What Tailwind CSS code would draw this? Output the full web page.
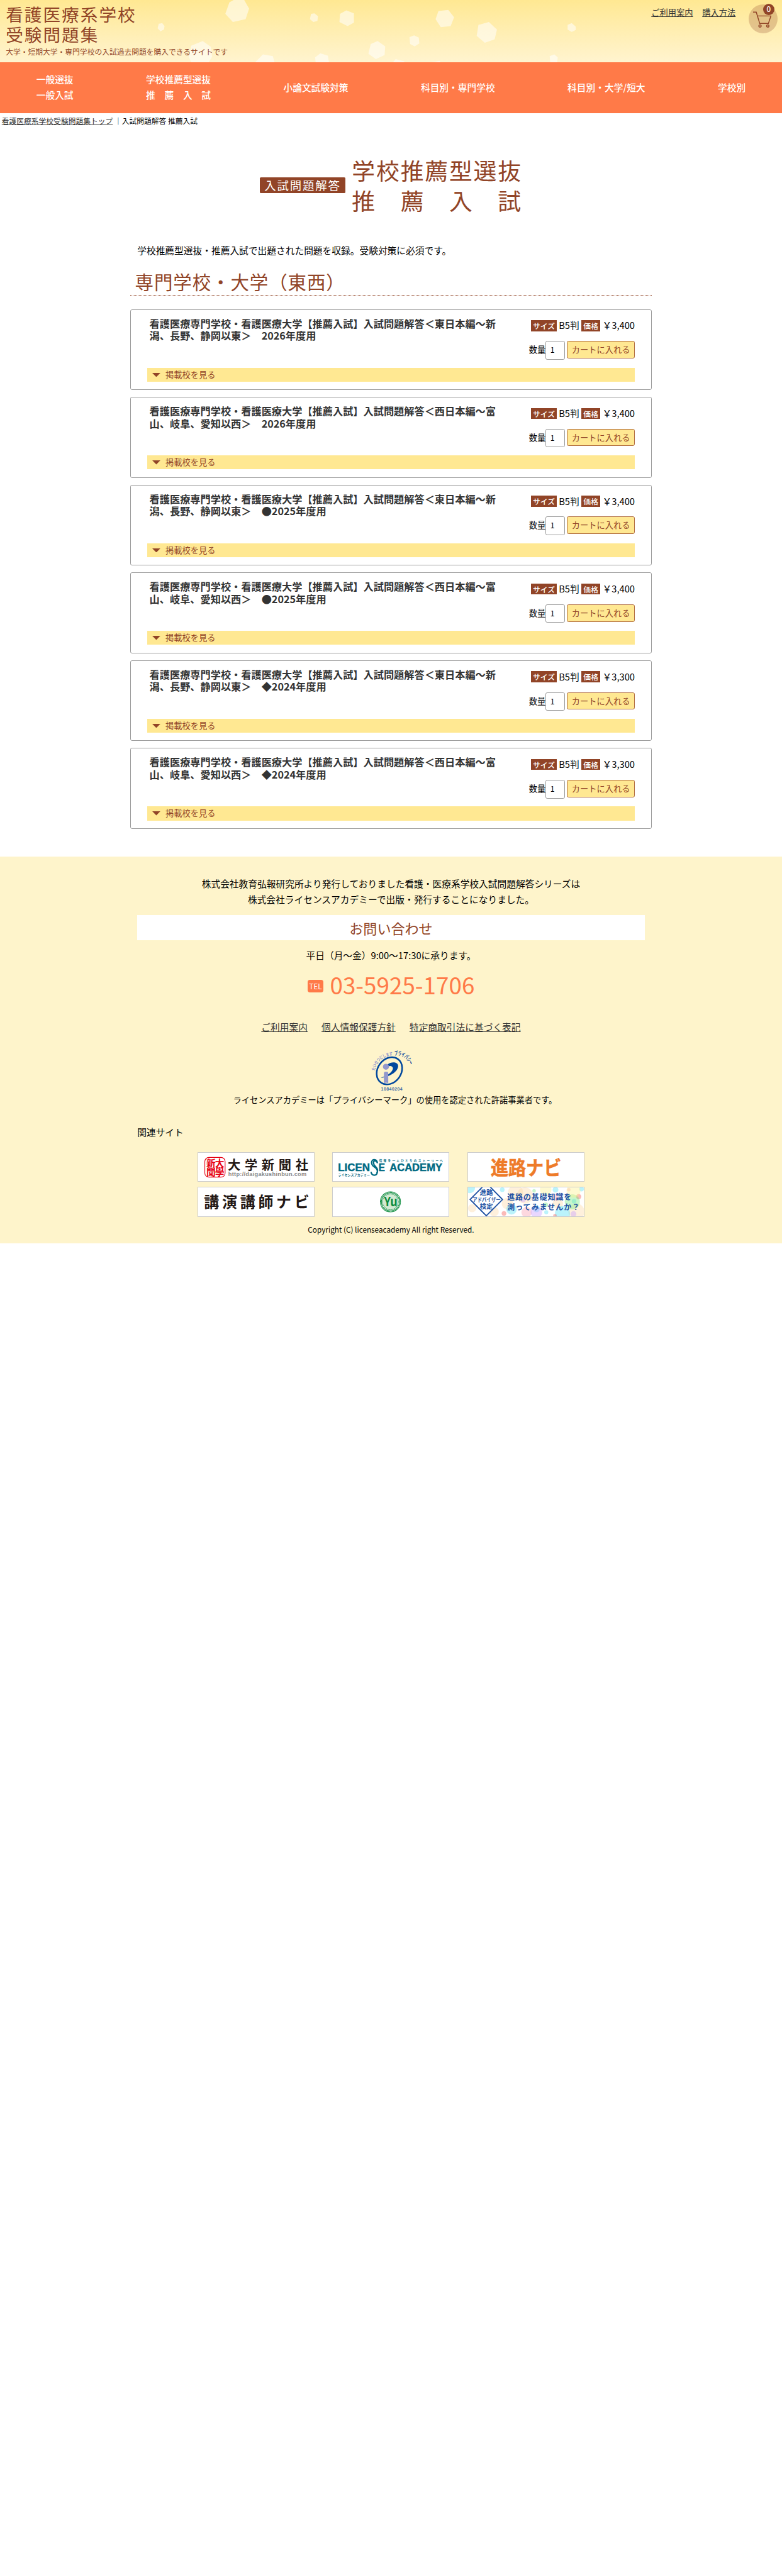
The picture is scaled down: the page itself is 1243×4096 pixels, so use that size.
<!DOCTYPE html>
<html lang="ja">
<head>
<meta charset="utf-8">
<title>看護医療系学校受験問題集</title>
<script src="https://cdn.jsdelivr.net/npm/@tailwindcss/browser@4"></script>
</head>
<body class="bg-white">
<div class="w-[1350px] font-['Noto_Sans_CJK_JP',sans-serif] text-base text-black [zoom:0.9207]">

<header class="relative h-[108px] overflow-hidden bg-linear-to-b from-[#ffe892] to-[#fff4cf]">
  <svg class="absolute inset-0" width="1350" height="108" viewBox="0 0 1350 108" fill="#fff" fill-opacity=".55">
    <path d="M396 4 407-2 421-1 430 15 424 33 402 38 389 24Z"/>
    <path d="M274 41 280 40 284 45 283 51 277 54 272 49Z"/>
    <path d="M537 24 543 23 549 28 548 36 541 38 535 33Z"/>
    <path d="M587 24 598 18 611 23 611 39 600 45 586 38Z"/>
    <path d="M330 79 350 71 364 81 366 98 360 108 330 108 326 98Z"/>
    <path d="M440 108 454 94 471 97 474 108Z"/>
    <path d="M545 108 544 99 553 92 566 96 568 108Z"/>
    <path d="M640 76 652 71 665 80 664 95 649 102 636 93Z"/>
    <path d="M757 19 774 17 784 30 778 45 761 47 752 33Z"/>
    <path d="M826 43 844 38 858 51 854 68 837 74 823 62Z"/>
    <path d="M980 43 987 40 994 46 994 52 987 55 980 51Z"/>
    <path d="M707 64 715 61 723 65 724 75 716 80 708 76Z"/>
    <path d="M949 97 957 94 963 99 962 108 950 108Z"/>
    <path d="M678 108 683 102 698 106 698 108Z"/>
    <path d="M743 108 759 105 761 108Z"/>
  </svg>
  <div class="relative flex items-start justify-between">
    <div class="pl-[10px] pt-[6px] text-[#914427]">
      <h1 class="text-[30px] leading-[35px] tracking-[2.2px]">看護医療系学校<br>受験問題集</h1>
      <p class="mt-[3px] text-[12.8px] leading-[20px]">大学・短期大学・専門学校の入試過去問題を購入できるサイトです</p>
    </div>
    <div class="flex pr-[8px] pt-[8px]">
      <nav class="flex gap-[16px] pr-[22px] pt-[3px] text-[14.4px] leading-[22px] text-[#333]">
        <a class="underline">ご利用案内</a><a class="underline">購入方法</a>
      </nav>
      <div class="relative size-[50px] rounded-full bg-[#914427]/25">
        <svg class="absolute left-[8px] top-[12px]" width="32" height="29" viewBox="0 0 32 29" fill="none" stroke="#914427" stroke-width="1.6">
          <path d="M0 1.3H5.5L11.5 21H26.5L30.8 8H7.7"/><circle cx="12" cy="25.3" r="2"/><circle cx="25.5" cy="25.3" r="2"/>
        </svg>
        <span class="absolute -top-[2px] left-[25px] flex size-[20px] items-center justify-center rounded-full bg-[#914427] pb-[1px] text-[12.8px] font-medium leading-none text-white">0</span>
      </div>
    </div>
  </div>
</header>

<nav class="flex h-[87px] items-center justify-around bg-[#ff7a48] pb-[1px] text-[16px] font-medium leading-[27px] text-white">
  <a>一般選抜<br>一般入試</a>
  <a>学校推薦型選抜<br>推　薦　入　試</a>
  <a>小論文試験対策</a>
  <a>科目別・専門学校</a>
  <a>科目別・大学/短大</a>
  <a>学校別</a>
</nav>

<div class="h-[79px] pl-[3px] pt-[4px] text-[12.8px] leading-[20px]"><a class="text-[#333] underline">看護医療系学校受験問題集トップ</a> ｜入試問題解答 推薦入試</div>

<main class="mx-auto w-[900px]">
  <h2 class="flex h-[92px] items-center justify-center gap-[11px] text-[#914427]">
    <span class="h-[28px] rounded-[2px] bg-[#914427] px-[8px] text-[20px] leading-[27px] tracking-[2px] text-white">入試問題解答</span>
    <span class="text-[40px] leading-[52px] tracking-[2px]">学校推薦型選抜<br>推　薦　入　試</span>
  </h2>
  <p class="mt-[53.5px] pl-[12px] leading-[27px]">学校推薦型選抜・推薦入試で出題された問題を収録。受験対策に必須です。</p>
  <h3 class="mt-[14.5px] h-[49px] border-b border-dotted border-[#914427] pl-[8px] pt-[1px] text-[32px] leading-[48px] tracking-[1px] text-[#914427]">専門学校・大学（東西）</h3>
  <div id="items" class="mt-[24px] flex flex-col gap-[12px]"></div>
</main>

<footer class="mt-[48px] h-[668px] bg-[#fef4cb] pt-[32px] text-center">
  <p class="leading-[28px]">株式会社教育弘報研究所より発行しておりました看護・医療系学校入試問題解答シリーズは<br>株式会社ライセンスアカデミーで出版・発行することになりました。</p>
  <h3 class="mx-auto mt-[13px] h-[43px] w-[876px] bg-white text-[24px] leading-[44px] text-[#914427]">お問い合わせ</h3>
  <p class="mt-[12.5px] leading-[28px]">平日（月～金）9:00～17:30に承ります。</p>
  <div class="mt-[8.5px] flex h-[60px] items-center justify-center gap-[11px] text-[#ff7a48]">
    <span class="mt-[1px] flex h-[22px] w-[28px] items-center justify-center rounded-[4px] bg-[#ff7a48] text-[12.8px] leading-none text-white">TEL</span>
    <span class="mb-[4px] text-[40px] leading-[60px]">03-5925-1706</span>
  </div>
  <nav class="mt-[27px] flex justify-center gap-[24px] leading-[28px] text-[#333]">
    <a class="underline">ご利用案内</a><a class="underline">個人情報保護方針</a><a class="underline">特定商取引法に基づく表記</a>
  </nav>
  <svg class="mx-auto mt-[20px] translate-x-[1px]" width="82" height="82" viewBox="0 0 82 82">
    <ellipse cx="37" cy="42" rx="20.3" ry="25" fill="none" stroke="#00479d" stroke-width="2.7" transform="rotate(36 37 42)"/>
    <path d="M34 31C40 26 51 26 52 33C53 41 41 52 22 54C36 50 44 42 43 37C42 33 37 33 34 35Z" fill="#00479d"/>
    <circle cx="31" cy="35" r="5.2" fill="#9398cc"/>
    <path d="M27.500 46Q27.500 43.500 31 43.500Q35 43.500 35 46V63Q31 62 27.500 63Z" fill="#9398cc"/>
    <path id="arcA" d="M12.500 42C13 27 27 15.500 45 15.500" fill="none"/>
    <path id="arcB" d="M45.500 15.500C59 14 68 20 72 34" fill="none"/>
    <text font-size="8" font-weight="700" fill="#9398cc"><textPath href="#arcA" textLength="44" lengthAdjust="spacingAndGlyphs">たいせつにします</textPath></text>
    <text font-size="10" font-weight="700" fill="#00479d"><textPath href="#arcB" textLength="34" lengthAdjust="spacingAndGlyphs">プライバシー</textPath></text>
    <text x="22.500" y="76" font-size="7.500" font-weight="700" fill="#3a6aa5" font-family="Liberation Sans" textLength="37">10840204</text>
  </svg>
  <p class="mt-[1px] pl-[14px] text-[14.4px] leading-[20px]">ライセンスアカデミーは「プライバシーマーク」の使用を認定された許諾事業者です。</p>
  <p class="mt-[31px] pl-[237px] text-left leading-[28px]">関連サイト</p>
  <div class="mx-auto mt-[20px] grid w-[668px] grid-cols-[202px_202px_202px] gap-x-[31px] gap-y-[8px]">
    <div class="h-[52px] border border-[#ccc] bg-white">
      <svg width="200" height="50" viewBox="0 0 200 50">
        <rect x="11.500" y="8" width="35" height="34" rx="7" fill="none" stroke="#e60012" stroke-width="1.200"/>
        <g font-size="16" font-weight="700" fill="#e60012" text-anchor="middle"><text x="37" y="24">大</text><text x="37" y="39">學</text><text x="22" y="24">新</text><text x="22" y="39">聞</text></g>
        <text x="51" y="29" font-size="22" font-weight="700" fill="#231815" textLength="139">大学新聞社</text>
        <text x="52" y="40" font-size="10" font-weight="700" fill="#888" font-family="Liberation Sans" textLength="135">http://daigakushinbun.com</text>
      </svg>
    </div>
    <div class="h-[52px] border border-[#ccc] bg-white">
      <svg width="200" height="50" viewBox="0 0 200 50" fill="#006a83" font-family="Liberation Sans">
        <text x="9" y="32" font-size="17.500" font-weight="700" stroke="#006a83" stroke-width=".5" textLength="55" lengthAdjust="spacingAndGlyphs">LICEN</text>
        <path d="M77 18C76 10 67 10 67 17C67 26 78 24 77 33C76 41 67 40 66 33M76 16C72 11 69 15 71 20C74 26 80 27 76 35" fill="none" stroke="#006a83" stroke-width="2.400"/>
        <text x="79" y="32" font-size="17.500" font-weight="700" stroke="#006a83" stroke-width=".5" textLength="11" lengthAdjust="spacingAndGlyphs">E</text>
        <text x="98" y="32" font-size="17.500" font-weight="700" stroke="#006a83" stroke-width=".5" textLength="91" lengthAdjust="spacingAndGlyphs">ACADEMY</text>
        <text x="80" y="15" font-size="5" font-weight="700" font-family="Noto Sans CJK JP" textLength="110">情報を一人ひとりのストーリーへ</text>
        <text x="9" y="40" font-size="5.300" font-weight="700" font-family="Noto Sans CJK JP" textLength="55">ライセンスアカデミー</text>
      </svg>
    </div>
    <div class="h-[52px] border border-[#ccc] bg-white">
      <svg width="200" height="50" viewBox="0 0 200 50">
        <text x="39" y="38.500" font-size="33" font-weight="700" fill="#ee7b29" stroke="#ee7b29" stroke-width=".6" textLength="122" lengthAdjust="spacingAndGlyphs">進路ナビ</text>
      </svg>
    </div>
    <div class="h-[52px] border border-[#ccc] bg-white">
      <svg width="200" height="50" viewBox="0 0 200 50">
        <text x="10" y="35" font-size="26" font-weight="700" fill="#231815" textLength="182">講演講師ナビ</text>
      </svg>
    </div>
    <div class="h-[52px] border border-[#ccc] bg-white">
      <svg width="200" height="50" viewBox="0 0 200 50">
        <circle cx="99.500" cy="25" r="16.500" fill="#fff" stroke="#0b8a3d" stroke-width="3"/>
        <circle cx="99.500" cy="25" r="16.500" fill="none" stroke="#d5edd9" stroke-width="1.300" stroke-dasharray="1.500 1"/>
        <circle cx="99.500" cy="25" r="13.800" fill="#d3ead3" stroke="#0b8a3d" stroke-width=".8"/>
        <text x="88.500" y="33" font-size="22" font-weight="700" fill="#0b8a3d" textLength="23" lengthAdjust="spacingAndGlyphs">Yu</text>
      </svg>
    </div>
    <div class="h-[52px] border border-[#ccc] bg-white">
      <svg width="200" height="50" viewBox="0 0 200 50">
        <g fill-opacity=".4">
          <g fill="#fdd9a8"><circle cx="82" cy="9" r="13"/><circle cx="68" cy="28" r="10"/><circle cx="98" cy="14" r="14"/><circle cx="155" cy="28" r="9"/><circle cx="187" cy="42" r="14"/><circle cx="45" cy="42" r="8"/><circle cx="7" cy="36" r="7"/></g>
          <g fill="#55e2f5"><circle cx="3" cy="1" r="9"/><circle cx="75" cy="38" r="9"/><circle cx="163" cy="45" r="13"/><circle cx="59" cy="4" r="4"/><circle cx="135" cy="43" r="3.500"/><circle cx="151" cy="4" r="5"/><circle cx="183" cy="24" r="4"/><circle cx="118" cy="37" r="6"/><circle cx="43" cy="9" r="3"/><circle cx="196" cy="3" r="4"/></g>
          <g fill="#fb9db0"><circle cx="101" cy="43" r="9"/><circle cx="150" cy="17" r="6"/><circle cx="174" cy="4" r="3"/></g>
          <g fill="#f4524b"><circle cx="62" cy="45" r="4"/><circle cx="191" cy="16" r="4.500"/><circle cx="150" cy="49" r="3"/></g>
          <g fill="#74e87f"><circle cx="180" cy="25" r="13"/><circle cx="114" cy="6" r="3"/><circle cx="134" cy="30" r="4"/></g>
          <g fill="#c79bff"><circle cx="118" cy="43" r="10"/><circle cx="95" cy="21" r="5"/><circle cx="182" cy="46" r="5"/></g>
          <g fill="#fdf08a"><circle cx="134" cy="4" r="10"/><circle cx="182" cy="6" r="12"/></g>
        </g>
        <path d="M31.500-7.500 59.500 21 31.500 49 3.500 21Z" fill="#fff" stroke="#1d50a2" stroke-width="2"/>
        <g fill="#1d50a2" font-weight="700">
          <g font-size="11.500" text-anchor="middle"><text x="31.500" y="13.500">進路</text><text x="31.500" y="37">検定</text></g>
          <text x="8" y="25" font-size="10" textLength="48" lengthAdjust="spacingAndGlyphs">アドバイザー</text>
          <g font-size="13"><text x="67.500" y="21.500" textLength="111">進路の基礎知識を</text><text x="67.500" y="39" textLength="125">測ってみませんか？</text></g>
        </g>
      </svg>
    </div>
  </div>
  <p class="mt-[12.5px] text-[12.8px] leading-[20px]">Copyright (C) licenseacademy All right Reserved.</p>
</footer>
</div>

<script>
const east = ['東日本編～新', '潟、長野、静岡以東＞'];
const west = ['西日本編～富', '山、岐阜、愛知以西＞'];
const items = [
  [east, '2026', '3,400'], [west, '2026', '3,400'],
  [east, '●2025', '3,400'], [west, '●2025', '3,400'],
  [east, '◆2024', '3,300'], [west, '◆2024', '3,300'],
];
document.getElementById('items').innerHTML = items.map(([area, year, price]) => `
  <section class="flex h-[139.6px] flex-col rounded-[3px] border border-[#999] px-[28px] pt-[13px]">
    <div class="flex h-[87px] justify-between pl-[4px]">
      <h4 class="whitespace-nowrap text-[17.6px] font-bold leading-[21.2px] text-[#333]">看護医療専門学校・看護医療大学【推薦入試】入試問題解答＜${area[0]}<br>${area[1]}　${year}年度用</h4>
      <div class="flex flex-col items-end pt-[2px]">
        <div class="flex h-[24px] items-center whitespace-nowrap">
          <span class="mt-[1px] h-[19px] bg-[#914427] px-[2.8px] text-[12.8px] font-medium leading-[19px] text-white">サイズ</span>
          <span class="px-[4px]">B5判</span>
          <span class="mt-[1px] h-[19px] bg-[#914427] px-[3.2px] text-[12.8px] font-medium leading-[19px] text-white">価格</span>
          <span class="pl-[4px]">￥${price}</span>
        </div>
        <div class="mt-[15px] flex h-[32px] text-[14.4px]">
          <span class="leading-[30px]">数量</span>
          <span class="mr-[4px] h-[32px] w-[33px] rounded-[3px] border border-[#999] bg-white pl-[7px] text-[13.3px] leading-[29px]">1</span>
          <span class="h-[30px] w-[117px] rounded-[3px] border border-[#b06a3c] bg-[#ffe892] text-center leading-[28px] text-[#914427]">カートに入れる</span>
        </div>
      </div>
    </div>
    <div class="flex h-[24px] items-center bg-[#ffe892] pl-[8.5px] text-[14.4px] leading-[24px] text-[#914427]">
      <svg width="14" height="7" viewBox="0 0 14 7"><path d="M0 0H14L7 7Z" fill="#914427"/></svg>
      <span class="pl-[9px]">掲載校を見る</span>
    </div>
  </section>`).join('');
</script>
</body>
</html>
